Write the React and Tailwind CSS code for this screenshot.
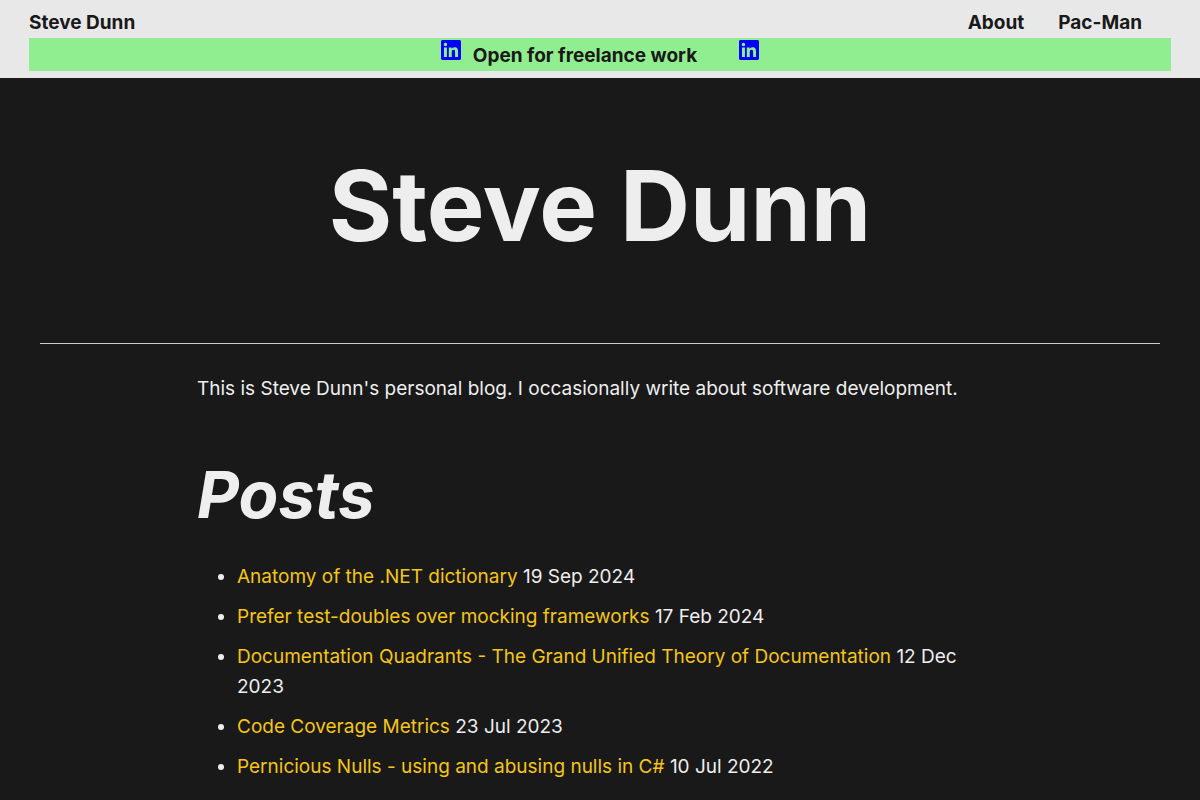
const posts = [
  ["Anatomy of the .NET dictionary", "19 Sep 2024"],
  ["Prefer test-doubles over mocking frameworks", "17 Feb 2024"],
  ["Documentation Quadrants - The Grand Unified Theory of Documentation", "12 Dec 2023"],
  ["Code Coverage Metrics", "23 Jul 2023"],
  ["Pernicious Nulls - using and abusing nulls in C#", "10 Jul 2022"],
];

function LinkedIn() {
  return (
    <a href="#linkedin" aria-label="LinkedIn" className="p-0.5 text-[#0000ff]">
      <svg viewBox="0 0 24 24" className="size-5" fill="currentColor" aria-hidden="true">
        <path d="M20.447 20.452h-3.554v-5.569c0-1.328-.027-3.037-1.852-3.037-1.853 0-2.136 1.445-2.136 2.939v5.667H9.351V9h3.414v1.561h.046c.477-.9 1.637-1.85 3.37-1.85 3.601 0 4.267 2.37 4.267 5.455v6.286zM5.337 7.433a2.062 2.062 0 0 1-2.063-2.065 2.064 2.064 0 1 1 2.063 2.065zm1.782 13.019H3.555V9h3.564v11.452zM22.225 0H1.771C.792 0 0 .774 0 1.729v20.542C0 23.227.792 24 1.771 24h20.451C23.2 24 24 23.227 24 22.271V1.729C24 .774 23.2 0 22.222 0h.003z" />
      </svg>
    </a>
  );
}

export default function App() {
  return (
    <div className="min-h-screen bg-[#191919] font-[Inter,sans-serif] text-[19px] leading-[30px] text-[#eeeeee]">
      <header className="bg-[#e8e8e8] px-[29px] pt-2 pb-[7px] font-bold text-[#191919]">
        <nav className="flex justify-between pr-[29px]">
          <a href="#home">Steve Dunn</a>
          <div className="flex gap-[34px]">
            <a href="#about">About</a>
            <a href="#pacman">Pac-Man</a>
          </div>
        </nav>
        <div className="flex justify-center bg-[#90ee90]">
          <LinkedIn />
          <span className="mr-10 ml-[10px] pt-[3px]">Open for freelance work</span>
          <LinkedIn />
        </div>
      </header>
      <main>
        <h1 className="pt-[69px] text-center text-[97px] leading-[118px] font-bold">Steve Dunn</h1>
        <hr className="mx-10 mt-[78px] border-[#cccccc]" />
        <div className="mx-auto max-w-[806px]">
          <p className="pt-[30px]">This is Steve Dunn's personal blog. I occasionally write about software development.</p>
          <h2 className="pt-[49px] text-[65px] leading-[84px] font-bold italic">Posts</h2>
          <ul className="flex list-disc flex-col gap-[10px] pt-[25px] pr-[30px] pb-10 pl-10">
            {posts.map(([title, date]) => (
              <li key={title}>
                <a href="#post" className="text-[#f5c518]">{title}</a> {date}
              </li>
            ))}
          </ul>
        </div>
      </main>
    </div>
  );
}
